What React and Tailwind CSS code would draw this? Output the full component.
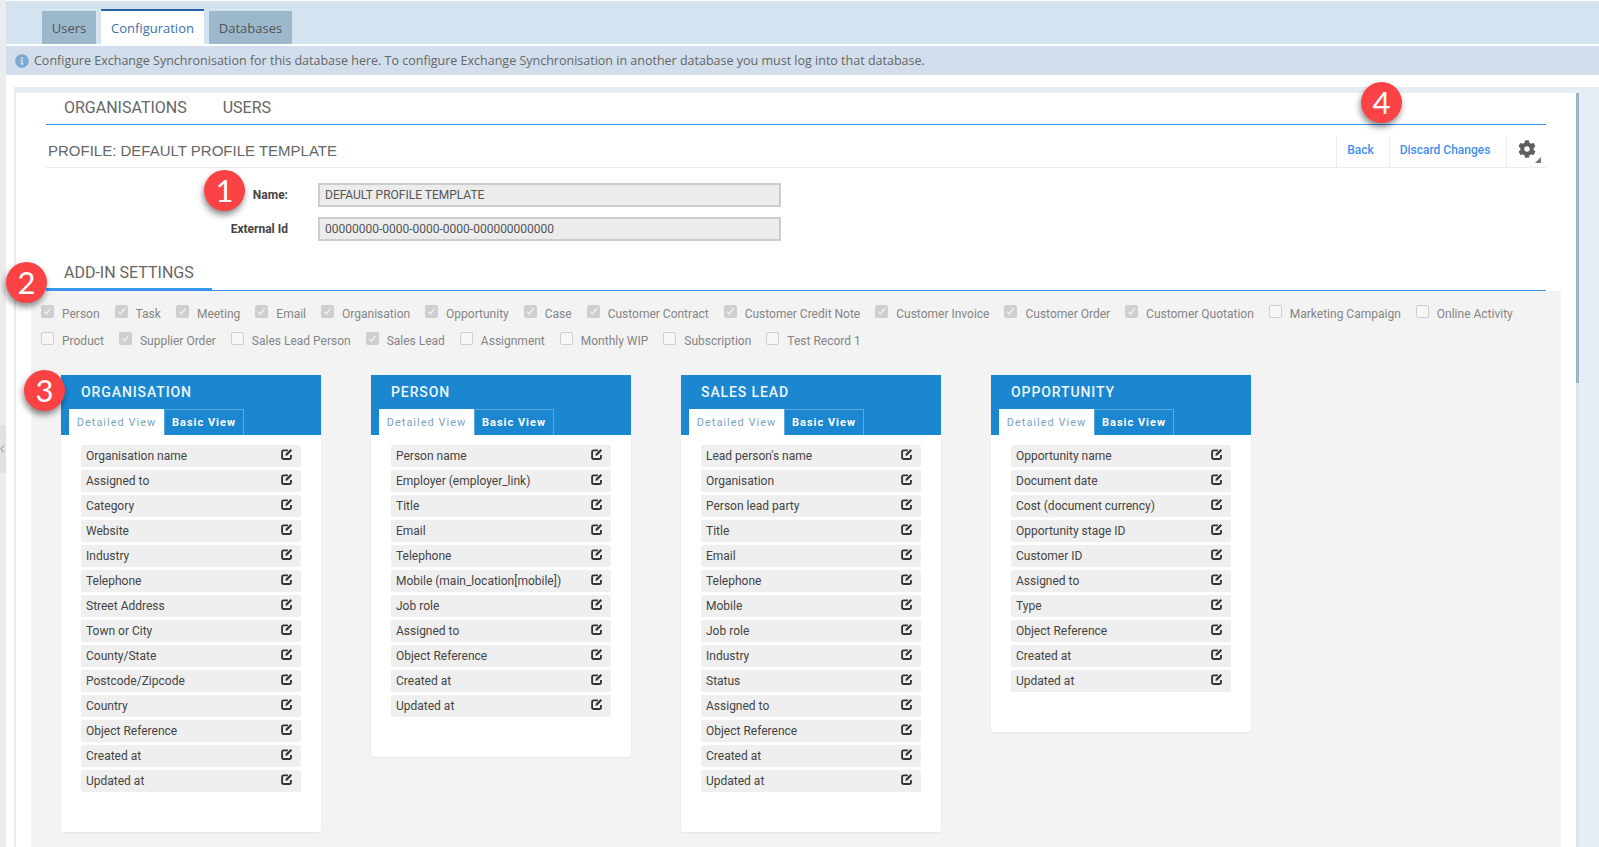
import React from "react";
import { FaCog, FaInfoCircle } from "react-icons/fa";

const row1 = [
  ["Person", true],
  ["Task", true],
  ["Meeting", true],
  ["Email", true],
  ["Organisation", true],
  ["Opportunity", true],
  ["Case", true],
  ["Customer Contract", true],
  ["Customer Credit Note", true],
  ["Customer Invoice", true],
  ["Customer Order", true],
  ["Customer Quotation", true],
  ["Marketing Campaign", false],
  ["Online Activity", false],
];

const row2 = [
  ["Product", false],
  ["Supplier Order", true],
  ["Sales Lead Person", false],
  ["Sales Lead", true],
  ["Assignment", false],
  ["Monthly WIP", false],
  ["Subscription", false],
  ["Test Record 1", false],
];

const cards = [
  {
    title: "ORGANISATION",
    rows: ["Organisation name", "Assigned to", "Category", "Website", "Industry", "Telephone", "Street Address", "Town or City", "County/State", "Postcode/Zipcode", "Country", "Object Reference", "Created at", "Updated at"],
  },
  {
    title: "PERSON",
    rows: ["Person name", "Employer (employer_link)", "Title", "Email", "Telephone", "Mobile (main_location[mobile])", "Job role", "Assigned to", "Object Reference", "Created at", "Updated at"],
  },
  {
    title: "SALES LEAD",
    rows: ["Lead person's name", "Organisation", "Person lead party", "Title", "Email", "Telephone", "Mobile", "Job role", "Industry", "Status", "Assigned to", "Object Reference", "Created at", "Updated at"],
  },
  {
    title: "OPPORTUNITY",
    rows: ["Opportunity name", "Document date", "Cost (document currency)", "Opportunity stage ID", "Customer ID", "Assigned to", "Type", "Object Reference", "Created at", "Updated at"],
  },
];

function EditIcon() {
  return (
    <svg className="mt-[-5px] shrink-0" width="12" height="12" viewBox="0 0 13 13" fill="none">
      <path d="M7.5 2.5H3C1.9 2.5 1.2 3.2 1.2 4.2v6c0 1 .7 1.7 1.8 1.7h6c1.1 0 1.8-.7 1.8-1.7V7.5" stroke="#333" strokeWidth="2" />
      <path d="M4.8 8.3 5.1 6.3 10.4 1 12 2.6 6.8 8Z" fill="#333" />
    </svg>
  );
}

function Check({ label, checked }) {
  return (
    <label className="mr-[15px] flex h-[16px] items-start">
      {checked ? (
        <span className="flex h-[13px] w-[13px] items-center justify-center rounded-[2px] bg-[#cfcfcf]">
          <svg width="9" height="9" viewBox="0 0 9 9" fill="none">
            <path d="M1.5 4.8 3.5 7 7.5 1.5" stroke="#f1f1f1" strokeWidth="1.3" />
          </svg>
        </span>
      ) : (
        <span className="h-[13px] w-[13px] rounded-[2px] border border-[#cfcfcf] bg-[#f7f7f7]"></span>
      )}
      <span className="ml-2 mt-[1px] whitespace-nowrap text-xs leading-[16px] text-[#858585]">{label}</span>
    </label>
  );
}

function Card({ title, rows }) {
  return (
    <div className="w-[260px] shrink-0 rounded-b-[3px] bg-white pb-10 shadow-[0_1px_2px_rgba(0,0,0,0.06)]">
      <div className="h-[60px] bg-[#1a87d0]">
        <div className="h-[34px] pl-5 pt-[8px] text-sm font-medium leading-[18px] tracking-[0.9px] text-[#eef6fc]">{title}</div>
        <div className="flex pl-2">
          <div className="flex h-[26px] w-[95px] items-center justify-center bg-white pt-[2px] text-[11px] tracking-[1px] text-[#7ba4c0]">Detailed View</div>
          <div className="flex h-[26px] w-[80px] items-center justify-center border border-b-0 border-[#5aa9dd] pt-px text-[11px] font-bold tracking-[1px] text-white">Basic View</div>
        </div>
      </div>
      <div className="flex flex-col gap-[3px] px-5 pt-[10px]">
        {rows.map((row) => (
          <div key={row} className="flex h-[22px] items-center justify-between rounded-[2px] bg-[#efefef] pl-[5px] pr-2 text-xs text-[#444]">
            <span>{row}</span>
            <EditIcon />
          </div>
        ))}
      </div>
    </div>
  );
}

function Badge({ n, className }) {
  return (
    <div className={"absolute flex h-[41px] w-[41px] items-center justify-center rounded-full bg-[#fb4245] font-['Lato',sans-serif] text-[31px] leading-none text-white shadow-[-1px_4px_6px_rgba(0,0,0,0.45)] " + className}>
      {n}
    </div>
  );
}

export default function App() {
  return (
    <div className="relative flex h-[847px] w-[1599px] overflow-hidden bg-white font-['Roboto',sans-serif]">
      {/* collapsed side strip */}
      <div className="w-[6px] shrink-0 bg-[#ececec] pt-[425px]">
        <div className="flex h-[48px] items-center bg-[#e1e1e1]">
          <svg width="5" height="8" viewBox="0 0 5 8" fill="none">
            <path d="M4 .5.8 4 4 7.5" stroke="#888" strokeWidth="1" />
          </svg>
        </div>
      </div>

      <div className="flex min-w-0 flex-1 flex-col">
        {/* top tabs */}
        <div className="mt-px flex h-[43px] shrink-0 items-end bg-[#d3e4f0] pl-9 font-['Open_Sans',sans-serif] text-[13px]">
          <div className="flex h-[33px] w-[54px] items-center justify-center bg-[#9cb8cd] pt-[2px] text-[#555]">Users</div>
          <div className="relative z-10 mb-[-2px] ml-[5px] flex h-[37px] w-[103px] items-center justify-center border-t-2 border-[#2462a8] bg-white text-[#3a74a8]">Configuration</div>
          <div className="ml-[5px] flex h-[33px] w-[83px] items-center justify-center bg-[#9cb8cd] pt-[2px] text-[#555]">Databases</div>
        </div>
        <div className="mt-[2px] flex h-[29px] shrink-0 items-center bg-[#d2deeb] pl-[9px] font-['Open_Sans',sans-serif] text-[12.5px] text-[#666]">
          <FaInfoCircle className="mr-[5px] text-[#7da8d0]" size={14} />
          <span className="pt-[2px]">Configure Exchange Synchronisation for this database here. To configure Exchange Synchronisation in another database you must log into that database.</span>
        </div>

        <div className="ml-2 mt-3 flex min-h-0 flex-1 bg-[#e6edf5] pl-[2px] pt-[6px]">
          <div className="w-[1560px] shrink-0 bg-white">
            <div className="mx-[30px] flex h-[32px] border-b-[1.5px] border-[#3a96f0] pl-[18px] pt-[3px] text-base text-[#666]">
              <span>ORGANISATIONS</span>
              <span className="ml-9">USERS</span>
            </div>

            <div className="mx-[30px] flex h-[43px] items-end justify-between border-b border-[#ececec] pl-[2px]">
              <span className="mb-[5px] font-['Liberation_Sans',sans-serif] text-[15px] text-[#666]">PROFILE: DEFAULT PROFILE TEMPLATE</span>
              <div className="flex h-[31px] items-stretch text-xs font-medium text-[#3f8ff0]">
                <div className="flex w-[53px] items-center justify-center border-l border-[#ececec] pb-1 pr-[5px]">Back</div>
                <div className="flex w-[117px] items-center justify-center border-l border-[#ececec] pb-1 pr-[6px]">Discard Changes</div>
                <div className="relative w-10 border-l border-[#ececec]">
                  <FaCog className="absolute left-[11px] top-[4px] text-[#5f5f5f]" size={18} />
                  <div className="absolute left-[28px] top-[21px] h-0 w-0 border-b-[6px] border-l-[6px] border-b-[#777] border-l-transparent"></div>
                </div>
              </div>
            </div>

            <div className="mx-[30px] mt-[15px] flex flex-col gap-[10px]">
              <div className="flex items-center">
                <span className="w-[242px] text-right text-xs font-bold text-[#444]">Name:</span>
                <div className="ml-[30px] flex h-[24px] w-[463px] items-center border-2 border-[#cdcdcd] bg-[#ececec] pl-[5px] text-xs text-[#555]">DEFAULT PROFILE TEMPLATE</div>
              </div>
              <div className="flex items-center">
                <span className="w-[242px] text-right text-xs font-bold text-[#444]">External Id</span>
                <div className="ml-[30px] flex h-[24px] w-[463px] items-center border-2 border-[#cdcdcd] bg-[#ececec] pl-[5px] text-xs text-[#555]">00000000-0000-0000-0000-000000000000</div>
              </div>
            </div>

            <div className="mx-[30px] flex h-[50px] items-end border-b border-[#3a96f0]">
              <div className="mb-[-1px] h-[30px] w-[166px] border-b-[3px] border-[#3a96f0] pl-[18px] text-base leading-[24px] text-[#666]">ADD-IN SETTINGS</div>
            </div>

            {/* grey settings area */}
            <div className="ml-[15px] h-[600px] w-[1530px] bg-[#f3f3f3] pl-[10px] pt-[14px]">
              <div className="flex h-[27px]">
                {row1.map(([label, checked]) => (
                  <Check key={label} label={label} checked={checked} />
                ))}
              </div>
              <div className="flex h-[43px]">
                {row2.map(([label, checked]) => (
                  <Check key={label} label={label} checked={checked} />
                ))}
              </div>
              <div className="flex items-start gap-[50px] pl-5">
                {cards.map((card) => (
                  <Card key={card.title} title={card.title} rows={card.rows} />
                ))}
              </div>
            </div>
          </div>

          {/* scrollbar */}
          <div className="w-[3px] shrink-0 bg-[#dde5ec]">
            <div className="h-[290px] bg-[#9db5c6]"></div>
          </div>
        </div>
      </div>

      <Badge n="1" className="left-[204px] top-[170px]" />
      <Badge n="2" className="left-[6px] top-[262px]" />
      <Badge n="3" className="left-[24px] top-[370px]" />
      <Badge n="4" className="left-[1361px] top-[82px]" />
    </div>
  );
}
